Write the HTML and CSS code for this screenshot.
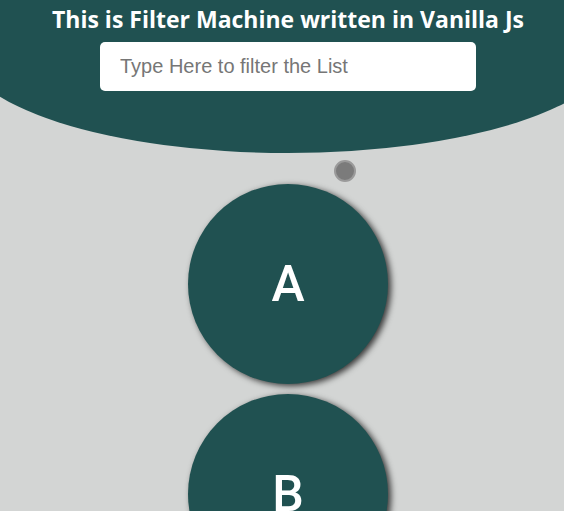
FILE: index.html
```html
<!DOCTYPE html>
<html lang="en">
<head>
<meta charset="utf-8">
<title>Filter Machine</title>
<link rel="stylesheet" href="styles.css">
</head>
<body>
<div class="page">
  <header class="hero">
    <h1 class="title">This is Filter Machine written in Vanilla Js</h1>
    <input class="search" type="text" placeholder="Type Here to filter the List">
  </header>
  <div class="dot"></div>
  <ul class="list">
    <li class="item">A</li>
    <li class="item">B</li>
  </ul>
</div>
</body>
</html>
```
FILE: styles.css
```css
html, body {
  margin: 0;
  padding: 0;
  overflow: hidden;
  background: #d3d5d4;
}
.page {
  width: 576px;
  display: flex;
  flex-direction: column;
  align-items: stretch;
}
.hero {
  width: 650px;
  height: 210px;
  margin: -57px 0 0 -37px;
  padding-top: 57px;
  box-sizing: border-box;
  background: #205151;
  border-radius: 50%;
  display: flex;
  flex-direction: column;
  align-items: center;
}
.title {
  margin: 4px 0 0;
  font-family: "Open Sans", sans-serif;
  font-weight: 700;
  font-size: 23px;
  line-height: 30px;
  color: #fff;
}
.search {
  margin-top: 8px;
  width: 376px;
  height: 49px;
  box-sizing: border-box;
  border: none;
  border-radius: 5px;
  padding: 0 20px;
  font-family: "Liberation Sans", Arial, sans-serif;
  font-size: 20px;
  background: #fff;
  outline: none;
}
.search::placeholder {
  color: #767676;
}
.dot {
  width: 22px;
  height: 22px;
  box-sizing: border-box;
  margin: 7px 0 2px calc(50% + 46px);
  border-radius: 50%;
  background: #7b7b7b;
  border: 2px solid #9a9a9a;
}
.list {
  list-style: none;
  margin: 0;
  padding: 0;
  display: flex;
  flex-direction: column;
  align-items: center;
  gap: 10px;
}
.item {
  width: 200px;
  height: 200px;
  border-radius: 50%;
  background: #205151;
  box-shadow: 3px 2px 6px rgba(0, 0, 0, 0.75);
  display: flex;
  align-items: center;
  justify-content: center;
  color: #fff;
  font-family: Roboto, "Open Sans", sans-serif;
  font-weight: 500;
  font-size: 50px;
  line-height: 1;
}
```
